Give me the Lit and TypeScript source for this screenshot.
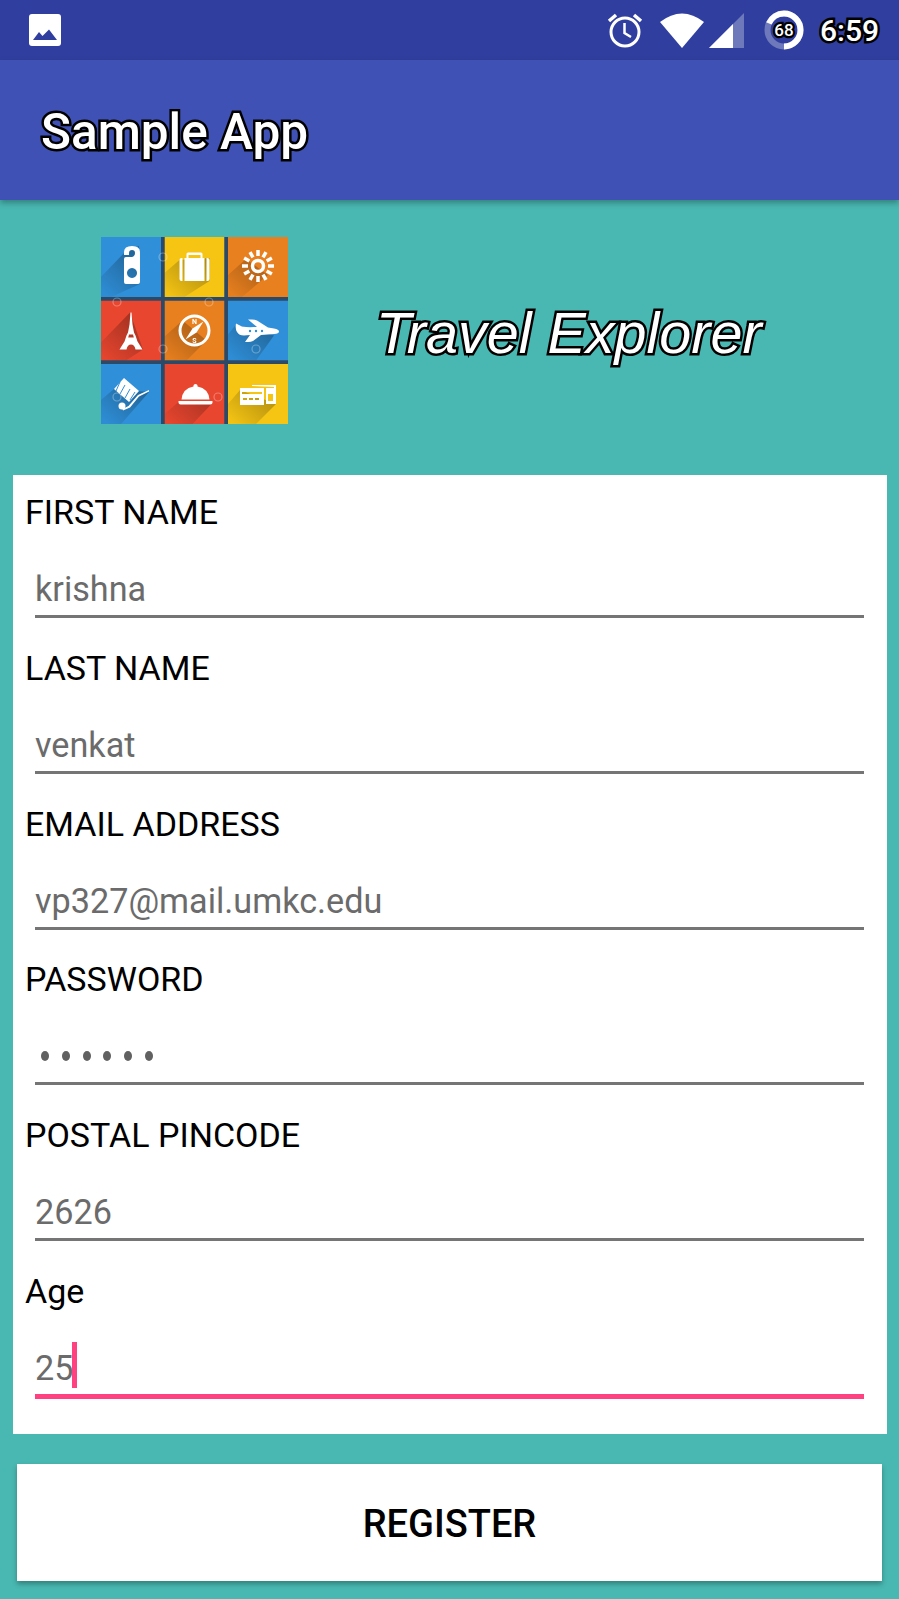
import { LitElement, html, svg, css } from 'lit';
import { customElement } from 'lit/decorators.js';

const FIELDS = [
  { label: 'FIRST NAME', value: 'krishna' },
  { label: 'LAST NAME', value: 'venkat' },
  { label: 'EMAIL ADDRESS', value: 'vp327@mail.umkc.edu' },
  { label: 'PASSWORD', dots: 6 },
  { label: 'POSTAL PINCODE', value: '2626' },
  { label: 'Age', value: '25', focused: true },
];

const BLUE = '#2f8fd8';
const YELLOW = '#f6c514';
const ORANGE = '#e9801f';
const RED = '#e8462f';

// tile icons, drawn in a 60x60 box
const HANGER = svg`<path fill="#fff" fill-rule="evenodd" d="M23 15q0-6 8-6t8 6v30q0 2-2 2H25q-2 0-2-2V22q0-2 2-2h6q3-1 3-4 0-3-3-3t-3 3v2h-5Zm8 16a5 5 0 1 0 .01 0Z"/>`;
const SUITCASE = svg`<path fill="#fff" d="M22 21v-4q0-1.500 1.500-1.500h13q1.500 0 1.500 1.500v4h-2v-3H24v3Z"/><path fill="#fff" d="M15 23q0-2 2-2h1v23h-1q-2 0-2-2ZM20 21h20v23H20ZM42 21h1q2 0 2 2v19q0 2-2 2h-1Z"/>`;
const SUN = svg`<g fill="none" stroke="#fff"><circle cx="30" cy="29" r="5.500" stroke-width="3.500"/><g stroke-width="3.500">${[0, 30, 60, 90, 120, 150, 180, 210, 240, 270, 300, 330].map(
  (a) => svg`<path transform="rotate(${a} 30 29)" d="M30 19V13"/>`
)}</g></g>`;
const TOWER = svg`<path fill="#fff" fill-rule="evenodd" d="M29.500 12h1l1 12 1.500 8 1.500 3 2 6 5 8h-7q-1-5-4.500-5t-4.500 5h-7l5-8 2-6 1.500-3 1.500-8Zm-1.500 22-.8 3h5.600l-.8-3Z"/>`;
const COMPASS = svg`<circle cx="30" cy="30" r="14.500" fill="none" stroke="#fff" stroke-width="3"/><path fill="#fff" d="m39 21-7 11-11 7 7-11Z"/><text x="30" y="23" text-anchor="middle" font-family="Roboto, sans-serif" font-size="7" font-weight="700" fill="#fff">N</text><text x="30" y="42" text-anchor="middle" font-family="Roboto, sans-serif" font-size="7" font-weight="700" fill="#fff">S</text>`;
const PLANE = svg`<path fill="#fff" d="m8 23 6 3q6 1 12 .500h3L20 19h4q3 0 5 1l11 7 6 1q5 1 5 3t-5 2.500l-13 1-8 6q-2 1-5 1h-3l5-7-6 .500q-5 0-7-3.500T8 23Z"/><g fill="#2f8fd8"><circle cx="22" cy="30.500" r="1.200"/><circle cx="28" cy="30.500" r="1.200"/><circle cx="34" cy="30.500" r="1.200"/></g>`;
const CART = svg`<g fill="#fff"><path d="m13 25 10-11 15 13-10 11Z"/><path d="m37 31 11-5v1.500l-10 5-9 11-7 3-.5-1.500 6-3Z"/><circle cx="21" cy="42" r="3.500"/></g><path stroke="#2f8fd8" stroke-width="1" d="m19 18 -4 9M24 21l-5 9M29 25l-5 9M34 28l-5 8"/>`;
const CLOCHE = svg`<path fill="#fff" d="M14 37h34v1.500q0 2-2 2H16q-2 0-2-2ZM17 35.500q1-11 12-13v-1q0-1.500 2-1.500t2 1.500v1q11 2 12 13Z"/>`;
const CARDS = svg`<path fill="#fff" fill-rule="evenodd" d="M12 24h24v17H12Zm2 4v2h20v-2Zm1 6v2h4v-2Zm6 0v2h4v-2Zm6 0v2h4v-2Z"/><path fill="#fff" fill-rule="evenodd" d="M24 22v-1h24v19H38V24h8v-1ZM40 30v7h5v-7Z"/>`;

const TILES = [
  { bg: BLUE, icon: HANGER, shadow: 'M24 15 38 9 39 47 10 60 0 60 0 40Z' },
  { bg: YELLOW, icon: SUITCASE, shadow: 'M15 23 45 21 45 44 20 60 0 60 0 36Z' },
  { bg: ORANGE, icon: SUN, shadow: 'M18 22 40 38 14 60 0 60 0 38Z' },
  { bg: RED, icon: TOWER, shadow: 'M29 12 42 49 25 60 0 60 0 42Z' },
  { bg: ORANGE, icon: COMPASS, shadow: 'M18 20 42 40 22 60 0 60 0 36Z' },
  { bg: BLUE, icon: PLANE, shadow: 'M8 24 46 35 28 60 0 60 0 34Z' },
  { bg: BLUE, icon: CART, shadow: 'M13 25 48 28 20 60 0 60 0 36Z' },
  { bg: RED, icon: CLOCHE, shadow: 'M14 38 48 39 28 60 0 60 0 50Z' },
  { bg: YELLOW, icon: CARDS, shadow: 'M12 26 48 40 28 60 0 60 0 40Z' },
];

const MARKS = [
  [62, 20],
  [16, 65],
  [108, 65],
  [62, 112],
  [16, 160],
  [155, 112],
  [117, 160],
];

@customElement('app-root')
export class AppRoot extends LitElement {
  static override styles = css`
    :host {
      display: block;
      width: 899px;
      height: 1599px;
      overflow: hidden;
      background: #49b8b2;
      font-family: Roboto, sans-serif;
    }

    .status {
      height: 60px;
      background: #303f9f;
      display: flex;
      align-items: center;
      padding: 0 20px 0 29px;
      box-sizing: border-box;
    }

    .status svg {
      display: block;
      flex: none;
    }

    .spacer {
      flex: 1;
    }

    .clock {
      margin-left: 16px;
      font-size: 30px;
      font-weight: 500;
      color: #fff;
      -webkit-text-stroke: 5px #000;
      paint-order: stroke fill;
    }

    .appbar {
      position: relative;
      height: 140px;
      background: #3f51b5;
      box-shadow: 0 3px 6px rgba(0, 0, 0, 0.3);
      display: flex;
      align-items: center;
      padding: 3px 0 0 41px;
      box-sizing: border-box;
    }

    .title {
      font-size: 49.500px;
      font-weight: 500;
      color: #fff;
      -webkit-text-stroke: 5px #000;
      paint-order: stroke fill;
    }

    .hero {
      display: flex;
      align-items: center;
      padding: 37px 0 51px 101px;
    }

    .logo {
      display: block;
      background: #2c4a68;
    }

    .blur {
      filter: blur(0.4px);
    }

    .brand {
      margin: 4px 0 0 88px;
      font-family: 'Liberation Sans', Arial, sans-serif;
      font-style: italic;
      font-size: 57.500px;
      color: #fff;
      -webkit-text-stroke: 5px #000;
      paint-order: stroke fill;
    }

    .card {
      margin: 0 12px 0 13px;
      background: #fff;
      height: 959px;
      box-sizing: border-box;
    }

    .field {
      height: 155.8px;
      padding: 0 23px 0 12px;
      box-sizing: border-box;
    }

    .label {
      height: 74px;
      line-height: 74px;
      font-size: 34px;
      color: #000;
    }

    .input {
      margin-left: 10px;
      height: 69px;
      box-sizing: border-box;
      padding: 20px 0 6px 0;
      border-bottom: 3px solid #757575;
      line-height: 40px;
      font-size: 34.200px;
      color: #6b6b6b;
      display: flex;
      align-items: center;
    }

    .input.focused {
      height: 71px;
      border-bottom: 5px solid #ff4081;
    }

    .caret {
      flex: none;
      width: 5px;
      height: 46px;
      margin: -5px 0 0 -1px;
      background: #ff4081;
    }

    .dots {
      display: flex;
      gap: 12.800px;
      padding-left: 6px;
    }

    .dots span {
      width: 8px;
      height: 10px;
      border-radius: 50%;
      background: #616161;
    }

    .register {
      display: block;
      margin: 30px 17px 0;
      width: 865px;
      height: 117px;
      border: none;
      background: #fff;
      box-shadow: 0 3px 5px rgba(0, 0, 0, 0.3);
      font-family: Roboto, sans-serif;
      font-size: 38px;
      font-weight: 500;
      color: #000;
      padding: 3px 0 0;
    }
  `;

  private _logo() {
    return html`<svg class="logo" width="187" height="187" viewBox="0 0 187 187">
      <defs>
        <linearGradient id="fade" gradientUnits="userSpaceOnUse" x1="40" y1="20" x2="5" y2="58">
          <stop offset="0" stop-color="#000" stop-opacity=".3"/>
          <stop offset="1" stop-color="#000" stop-opacity=".02"/>
        </linearGradient>
      </defs>
      <g class="blur">
        ${TILES.map((t, i) => {
          const x = (i % 3) * 63.5;
          const y = Math.floor(i / 3) * 63.5;
          return svg`<svg x=${x} y=${y} width="60" height="60" viewBox="0 0 60 60">
            <rect width="60" height="60" fill=${t.bg}/>
            <path d=${t.shadow} fill="url(#fade)"/>
            ${t.icon}
          </svg>`;
        })}
        ${MARKS.map(
          ([x, y]) => svg`<circle cx=${x} cy=${y} r="4" fill="none" stroke="#fff" stroke-width="1.200" opacity=".3"/>`
        )}
      </g>
    </svg>`;
  }

  private _statusIcons() {
    return html`
      <svg width="36" height="36" viewBox="0 0 36 36" fill="none" stroke="#fff">
        <circle cx="18" cy="20" r="14" stroke-width="3"/>
        <path stroke-width="2.500" d="M17.500 11v10l6.500 4"/>
        <path stroke-width="3.500" d="m2 9 7-6M34 9l-7-6"/>
      </svg>
      <svg style="margin-left:16px" width="46" height="36" viewBox="0 0 46 36">
        <path fill="#fff" d="M1 10Q23-7 45 10L23 36Z"/>
      </svg>
      <svg style="margin-left:3px" width="36" height="36" viewBox="0 0 36 36">
        <path fill="#fff" fill-opacity=".3" d="M36 1v35H1Z"/>
        <path fill="#fff" d="M25 12v24H1Z"/>
      </svg>
      <svg style="margin-left:20px" width="40" height="40" viewBox="0 0 40 40">
        <circle cx="20" cy="20" r="16.500" fill="none" stroke="#fff" stroke-opacity=".3" stroke-width="6"/>
        <circle cx="20" cy="20" r="16.500" fill="none" stroke="#fff" stroke-width="6"
          stroke-dasharray="70.500 103.670" transform="rotate(-90 20 20) translate(40 0) scale(-1 1)"/>
        <text x="20" y="26" text-anchor="middle" font-family="Roboto, sans-serif" font-size="17" font-weight="500"
          fill="#fff" stroke="#000" stroke-width="4.500" paint-order="stroke fill">68</text>
      </svg>
    `;
  }

  protected override render() {
    return html`
      <div class="status">
        <svg width="32" height="32" viewBox="0 0 32 32">
          <rect width="32" height="32" rx="3" fill="#fff"/>
          <path fill="#303f9f" d="m4 26 6-8 3.500 4L20 15.500 28 26Z"/>
        </svg>
        <div class="spacer"></div>
        ${this._statusIcons()}
        <div class="clock">6:59</div>
      </div>
      <div class="appbar"><div class="title">Sample App</div></div>
      <div class="hero">
        ${this._logo()}
        <div class="brand">Travel Explorer</div>
      </div>
      <div class="card">
        ${FIELDS.map(
          (f) => html`
            <div class="field">
              <div class="label">${f.label}</div>
              <div class="input ${f.focused ? 'focused' : ''}">
                ${f.dots
                  ? html`<div class="dots">${Array.from({ length: f.dots }, () => html`<span></span>`)}</div>`
                  : f.value}
                ${f.focused ? html`<div class="caret"></div>` : ''}
              </div>
            </div>
          `
        )}
      </div>
      <button class="register">REGISTER</button>
    `;
  }
}

declare global {
  interface HTMLElementTagNameMap {
    'app-root': AppRoot;
  }
}
